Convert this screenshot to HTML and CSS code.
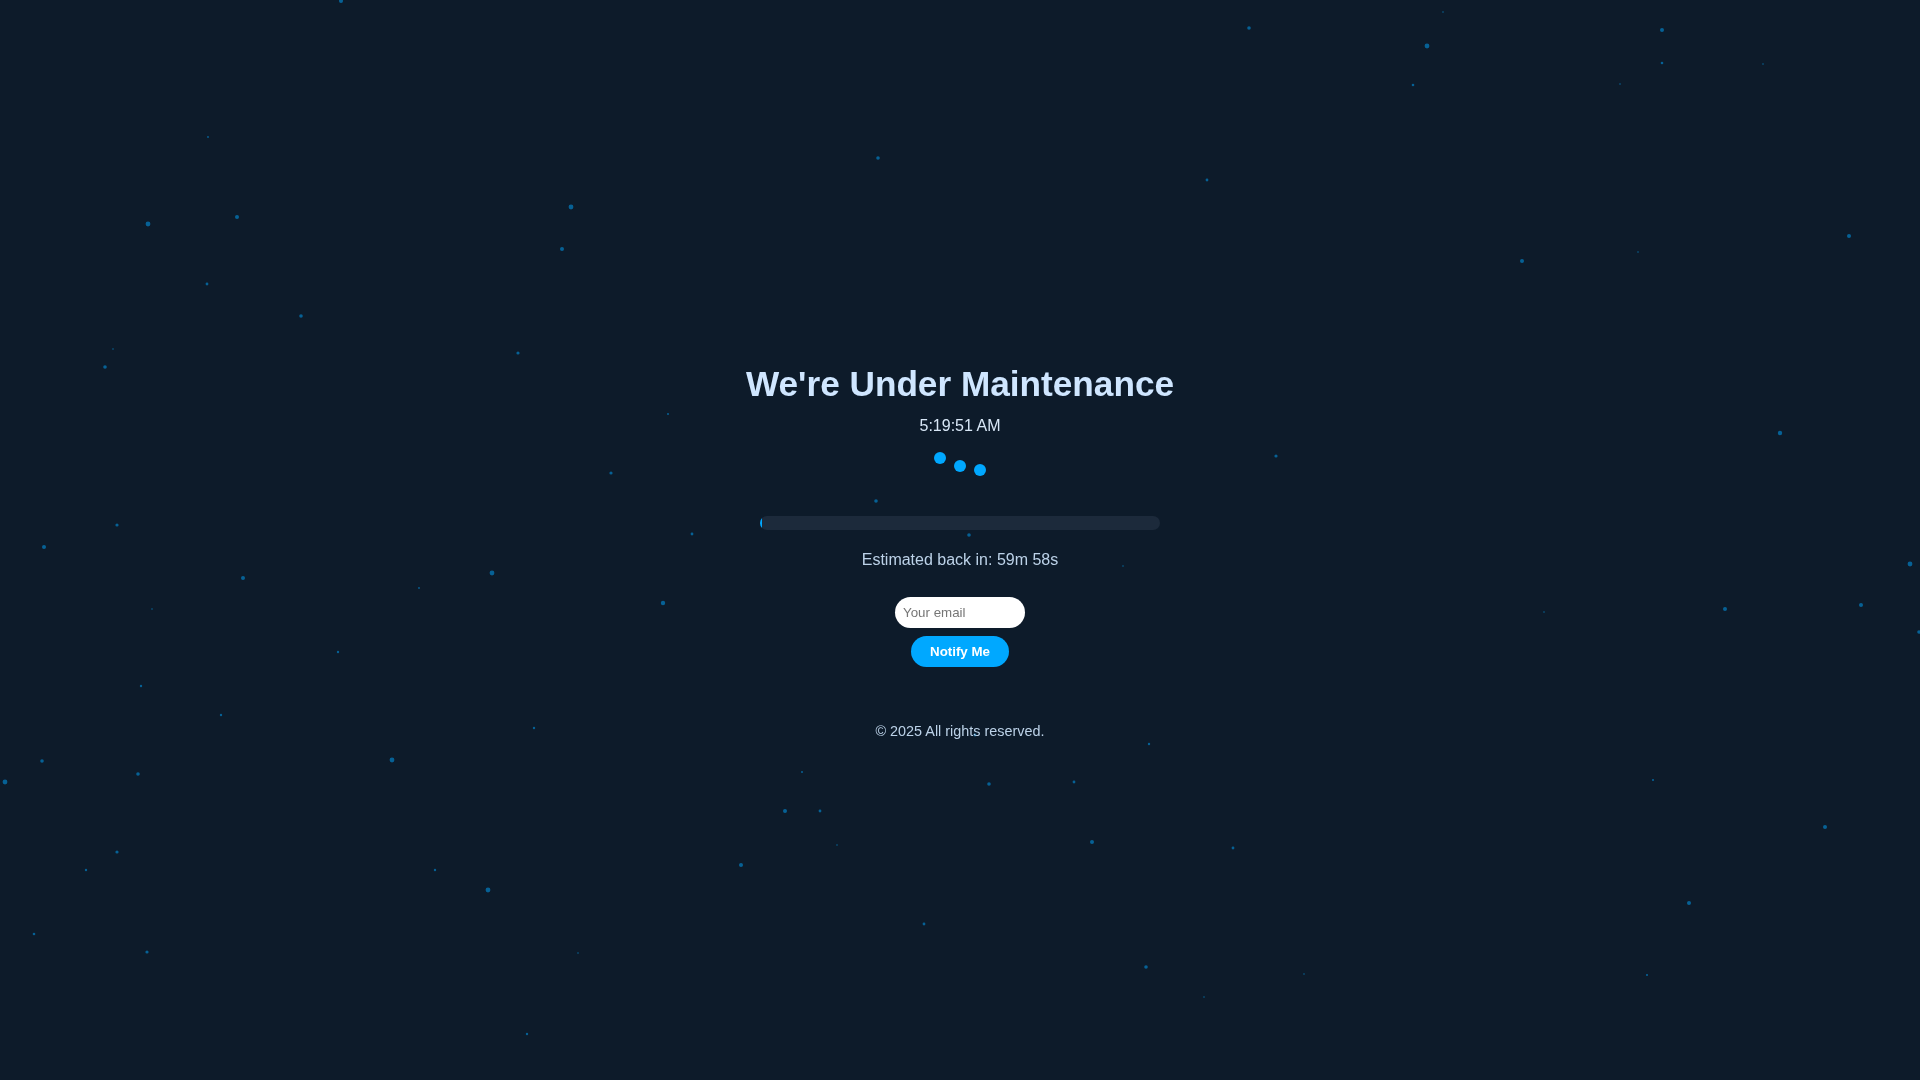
FILE: index.html
```html
<!DOCTYPE html>
<html lang="en">
<head>
  <meta charset="UTF-8">
  <meta name="viewport" content="width=device-width, initial-scale=1.0">
  <title>Under Maintenance</title>
  <link rel="stylesheet" href="styles.css">
</head>
<body>
  <!-- floating particles -->
  <svg class="particles" viewBox="0 0 1920 1080" preserveAspectRatio="none">
    <circle cx="341" cy="1" r="2"/>
    <circle cx="208" cy="137" r="0.9"/>
    <circle cx="148" cy="224" r="2.4"/>
    <circle cx="237" cy="217" r="2"/>
    <circle cx="571" cy="207" r="2.4"/>
    <circle cx="562" cy="249" r="2"/>
    <circle cx="207" cy="284" r="1.4"/>
    <circle cx="301" cy="316" r="1.8"/>
    <circle cx="113" cy="349" r="0.8"/>
    <circle cx="105" cy="367" r="1.8"/>
    <circle cx="518" cy="353" r="1.6"/>
    <circle cx="611" cy="473" r="1.6"/>
    <circle cx="117" cy="525" r="1.6"/>
    <circle cx="1249" cy="28" r="1.8"/>
    <circle cx="878" cy="158" r="1.8"/>
    <circle cx="1207" cy="180" r="1.4"/>
    <circle cx="668" cy="414" r="1"/>
    <circle cx="1276" cy="456" r="1.6"/>
    <circle cx="876" cy="501" r="1.8"/>
    <circle cx="692" cy="534" r="1.4"/>
    <circle cx="969" cy="535" r="1.8"/>
    <circle cx="1443" cy="12" r="0.8"/>
    <circle cx="1662" cy="30" r="2"/>
    <circle cx="1427" cy="46" r="2.4"/>
    <circle cx="1662" cy="63" r="1.3"/>
    <circle cx="1763" cy="64" r="0.8"/>
    <circle cx="1413" cy="85" r="1.3"/>
    <circle cx="1620" cy="84" r="0.8"/>
    <circle cx="1849" cy="236" r="2"/>
    <circle cx="1522" cy="261" r="2"/>
    <circle cx="1638" cy="252" r="0.8"/>
    <circle cx="1780" cy="433" r="2.2"/>
    <circle cx="44" cy="547" r="2"/>
    <circle cx="243" cy="578" r="2"/>
    <circle cx="492" cy="573" r="2.4"/>
    <circle cx="419" cy="588" r="0.9"/>
    <circle cx="152" cy="609" r="0.8"/>
    <circle cx="338" cy="652" r="1.2"/>
    <circle cx="141" cy="686" r="1.2"/>
    <circle cx="221" cy="715" r="1.2"/>
    <circle cx="534" cy="728" r="1.2"/>
    <circle cx="42" cy="761" r="1.8"/>
    <circle cx="392" cy="760" r="2.4"/>
    <circle cx="138" cy="774" r="1.8"/>
    <circle cx="5" cy="782" r="2.4"/>
    <circle cx="117" cy="852" r="1.6"/>
    <circle cx="86" cy="870" r="1.2"/>
    <circle cx="435" cy="870" r="1.2"/>
    <circle cx="488" cy="890" r="2.4"/>
    <circle cx="34" cy="934" r="1.3"/>
    <circle cx="147" cy="952" r="1.6"/>
    <circle cx="578" cy="953" r="0.8"/>
    <circle cx="527" cy="1034" r="1.2"/>
    <circle cx="1123" cy="566" r="0.8"/>
    <circle cx="663" cy="603" r="2.2"/>
    <circle cx="975" cy="735" r="1.4"/>
    <circle cx="1149" cy="744" r="1.2"/>
    <circle cx="802" cy="772" r="1"/>
    <circle cx="989" cy="784" r="1.8"/>
    <circle cx="1074" cy="782" r="1.4"/>
    <circle cx="785" cy="811" r="2"/>
    <circle cx="820" cy="811" r="1.4"/>
    <circle cx="837" cy="845" r="0.8"/>
    <circle cx="1092" cy="842" r="2"/>
    <circle cx="1233" cy="848" r="1.4"/>
    <circle cx="741" cy="865" r="2"/>
    <circle cx="924" cy="924" r="1.4"/>
    <circle cx="1146" cy="967" r="1.8"/>
    <circle cx="1204" cy="997" r="0.8"/>
    <circle cx="1910" cy="564" r="2.4"/>
    <circle cx="1544" cy="612" r="0.8"/>
    <circle cx="1725" cy="609" r="2"/>
    <circle cx="1861" cy="605" r="2"/>
    <circle cx="1919" cy="632" r="1.8"/>
    <circle cx="1653" cy="780" r="1.1"/>
    <circle cx="1825" cy="827" r="2"/>
    <circle cx="1689" cy="903" r="2"/>
    <circle cx="1304" cy="974" r="0.8"/>
    <circle cx="1647" cy="975" r="1.1"/>
  </svg>

  <main class="container">
    <h1 class="title">We're Under Maintenance</h1>
    <p class="clock" id="clock">5:19:51 AM</p>

    <div class="loader">
      <span class="dot dot-1"></span>
      <span class="dot dot-2"></span>
      <span class="dot dot-3"></span>
    </div>

    <div class="progress">
      <div class="progress-fill" style="width: 0.5%"></div>
    </div>
    <p class="eta" id="eta">Estimated back in: 59m 58s</p>

    <form class="notify-form">
      <input type="email" class="email-input" placeholder="Your email">
      <button type="button" class="notify-button">Notify Me</button>
    </form>

    <footer class="footer">© 2025 All rights reserved.</footer>
  </main>
</body>
</html>
```

FILE: styles.css
```css
body {
  margin: 0;
  padding: 0;
  min-height: 100vh;
  display: flex;
  flex-direction: column;
  justify-content: center;
  background: #0d1b2a;
  font-family: "Liberation Sans", Arial, sans-serif;
  color: #cfe6ff;
  overflow: hidden;
}

.particles {
  position: fixed;
  top: 0;
  left: 0;
  width: 100vw;
  height: 100vh;
  z-index: 0;
  pointer-events: none;
}

.particles circle {
  fill: rgba(0, 168, 255, 0.5);
}

.container {
  position: relative;
  z-index: 1;
  padding-top: 23px;
  display: flex;
  flex-direction: column;
  align-items: center;
  text-align: center;
}

.title {
  margin: 0 0 13px;
  font-size: 2.2rem;
  font-weight: bold;
  color: #cfe6ff;
}

.clock {
  margin: 0;
  font-size: 1rem;
  color: #d8e7f6;
}

.loader {
  display: flex;
  gap: 8px;
  margin: 29px 0 40px;
}

.dot {
  width: 12px;
  height: 12px;
  border-radius: 50%;
  background: #00a8ff;
}

.dot-1 {
  transform: translateY(-12px);
}

.dot-2 {
  transform: translateY(-4px);
}

.progress {
  width: 400px;
  height: 14px;
  border-radius: 7px;
  background: #1c2a3b;
  overflow: hidden;
}

.progress-fill {
  height: 100%;
  background: #00a8ff;
}

.eta {
  margin: 21px 0 0;
  font-size: 1rem;
  color: #bcd2e8;
}

.notify-form {
  margin-top: 28px;
  display: flex;
  flex-direction: column;
  align-items: center;
  gap: 8px;
}

.email-input {
  box-sizing: border-box;
  width: 130px;
  padding: 8px;
  font-family: "Liberation Sans", Arial, sans-serif;
  font-size: 13.333px;
  border: none;
  border-radius: 20px;
  background: #ffffff;
  color: #333333;
  outline: none;
}

.email-input::placeholder {
  color: #767676;
}

.notify-button {
  padding: 8px 19px;
  font-family: "Liberation Sans", Arial, sans-serif;
  font-size: 13.333px;
  font-weight: bold;
  color: #ffffff;
  background: #00a8ff;
  border: none;
  border-radius: 20px;
  cursor: pointer;
}

.notify-button:hover {
  background: #0096e6;
}

.footer {
  margin-top: 56px;
  font-size: 0.9rem;
  color: #bcd2e8;
}
```
